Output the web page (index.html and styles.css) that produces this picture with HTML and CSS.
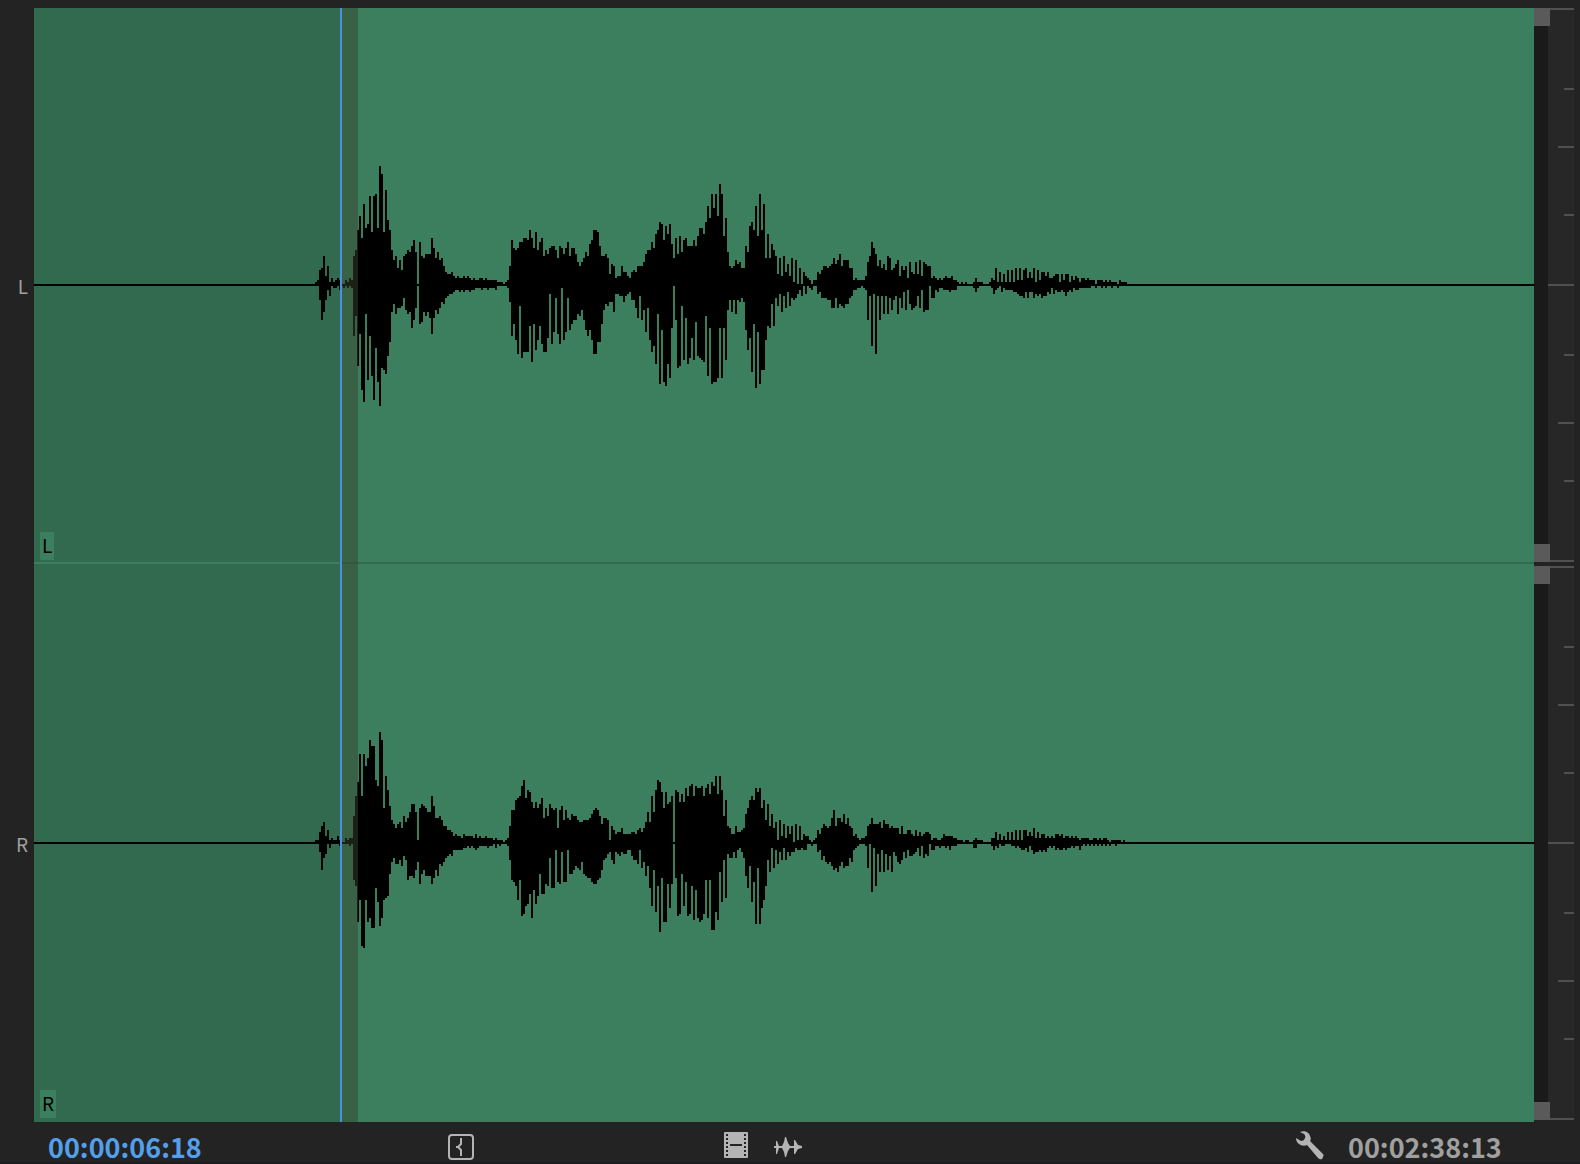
FILE: index.html
```
<!DOCTYPE html>
<html lang="en">
<head>
  <meta charset="UTF-8" />
  <meta name="viewport" content="width=device-width, initial-scale=1.0"/>
  <title>Source Monitor - Audio</title>
  <link rel="stylesheet" href="styles.css">
</head>
<body>
  <main class="monitor">
    <div class="gutter">
      <div class="gutter-label">L</div>
      <div class="gutter-label">R</div>
    </div>

    <!-- clip with both channels -->
    <div class="clip">
      <div class="channel">
        <svg class="wave" id="waveL" viewBox="0 0 1500 554" preserveAspectRatio="none"></svg>
        <span class="tag">L</span>
      </div>
      <div class="divider"></div>
      <div class="channel">
        <svg class="wave" id="waveR" viewBox="0 0 1500 554" preserveAspectRatio="none"></svg>
        <span class="tag">R</span>
      </div>
      <div class="in-range"></div>
      <div class="playhead"></div>
    </div>

    <!-- vertical zoom bars and level rulers -->
    <div class="side">
      <div class="side-row">
        <div class="zoom-bar"><div class="handle"></div><div class="handle"></div></div>
        <svg class="ruler" viewBox="0 0 26 554" preserveAspectRatio="none">
          <path d="M2 1H26M16 81H26M10 139H26M16 207H26M0 277H26M16 347H26M10 415H26M16 473H26M2 553H26"/>
        </svg>
      </div>
      <div class="side-row">
        <div class="zoom-bar"><div class="handle"></div><div class="handle"></div></div>
        <svg class="ruler" viewBox="0 0 26 554" preserveAspectRatio="none">
          <path d="M2 1H26M16 81H26M10 139H26M16 207H26M0 277H26M16 347H26M10 415H26M16 473H26M2 553H26"/>
        </svg>
      </div>
    </div>
  </main>

  <footer class="toolbar">
    <input class="timecode current" type="text" value="00:00:06:18" aria-label="Playhead position">
    <div class="tools">
      <button type="button" aria-label="Mark in">
        <svg width="26" height="26" viewBox="0 0 26 26" fill="none" stroke="#b4b4b4" stroke-width="2">
          <rect x="1" y="1" width="24" height="24" rx="3"/>
          <path d="M13 4V10L10 13L13 16V22"/>
          <path d="M8 13H11"/>
        </svg>
      </button>
    </div>
    <div class="tools">
      <button type="button" class="raised" aria-label="Drag video only">
        <svg width="24" height="26" viewBox="0 0 24 26">
          <rect width="24" height="26" rx="1" fill="#b4b4b4"/>
          <path d="M3 2V25M21 2V25" stroke="#232323" stroke-width="2" stroke-dasharray="2 2"/>
          <path d="M6 13H18" stroke="#232323" stroke-width="2"/>
        </svg>
      </button>
      <button type="button" aria-label="Drag audio only">
        <svg width="28" height="20" viewBox="0 0 28 20" fill="#b4b4b4">
          <path d="M0 9H2V4H3L5 9H8L10 5L11 0H12L14 6L16 9H20V3H21L24 8L28 9V11L24 12L21 17H20V11H16L14 14L12 20H11L10 15L8 11H5L3 17H2V11H0Z"/>
        </svg>
      </button>
    </div>
    <div class="tools end">
      <button type="button" class="raised" aria-label="Settings">
        <svg width="28" height="29" viewBox="0 0 28 29" fill="#b4b4b4">
          <path d="M4 1C8-1 13 1 14 5C15 7 15 9 14 10L27 23Q28 24 27 26L26 28Q24 29 22 27L11 14C8 16 3 14 1 11Q0 9 0 7L5 10Q8 10 9 7Q10 5 8 3Z"/>
        </svg>
      </button>
      <output class="timecode duration">00:02:38:13</output>
    </div>
  </footer>

  <script>
    // one "up/down" pair for each 2 unit column
    const peaksL = `
      1/0 2/0 7/7 8/17 14/13 4/7 9/2 1/5 3/0 1/1 2/1 3/0 2/2 0/0 0/1 2/0 1/1 3/0 2/1 14/25 17/15 27/40 34/24 23/52 40/58
      28/14 30/47 44/25 26/45 44/57 45/31 28/48 59/60 55/41 26/42 47/44 32/35 27/28 17/13 12/9 14/14 8/11 12/11 7/10
      14/6 15/12 17/14 16/13 19/21 22/17 16/11 0/0 21/19 14/18 13/13 15/15 15/13 15/16 23/24 18/16 13/12 16/14 12/11 13/8
      9/9 6/6 5/5 5/4 6/4 4/3 3/2 4/2 3/3 3/2 4/3 3/2 4/2 3/3 2/2 3/2 2/1 2/1 3/1 3/2 2/1 3/1 2/2 2/1 2/1 2/1 2/2 1/0
      1/0 1/0 0/0 1/0 2/1
      9/8 22/25 18/19 17/27 18/34 21/10 21/36 23/33 23/33 22/33 27/20 23/38 18/19 26/32 17/27 21/20 23/29 14/33 17/33
      15/26 18/4 19/29 19/23 17/6 13/24 19/29 18/1 15/27 18/23 21/6 14/22 18/19 18/17 15/17 11/14 9/15 11/12 13/17 16/22
      14/25 20/22 22/27 27/34 27/34 26/28 19/28 14/19 14/12 15/9 13/10 5/8 10/8 9/13 3/4 4/4 4/5 9/5 6/8 6/5 4/4 3/3 6/7
      7/7 6/11 9/16 9/5 9/17 11/12 15/23 17/11 17/27 21/33 18/30 25/39 27/14 31/49 30/22 22/48 29/50 25/39 30/46 20/21
      13/0 23/17 15/41 24/40 16/10 22/37 23/16 19/39 19/36 19/26 22/37 19/18 24/35 28/36 28/37 25/38 31/15 39/45 33/21
      45/49 38/48 45/48 34/46 50/21 45/46 24/21 33/37 16/12 9/7 8/13 9/7 12/14 10/7 11/8 8/6 8/8 19/22 16/32 29/26 31/43
      27/19 39/51 24/23 45/49 27/42 40/42 13/27 25/20 13/21 20/9 17/20 14/6 5/10 13/4 4/13 14/5 6/11 10/3
      4/10 13/6 1/7 12/6 0/4 8/2 0/5 6/0 4/4 3/0 2/1 0/2 2/0 2/0 6/4 5/3 7/6 9/6 9/6 8/7 9/7 10/11 13/11 10/6 12/11 15/9
      9/10 12/11 12/9 12/9 8/6 8/5 2/2 3/2 2/1 2/1 2/0 2/1 4/2 11/17 14/5 21/30 18/4 15/34 9/5 12/17 8/5 10/14 7/5 14/14
      13/6 7/12 8/7 10/5 12/14 4/6 9/11 7/3 9/12 3/2 11/9 6/12 5/11 11/10 5/5 12/11 4/2 11/13 10/12 9/12 9/0 3/6 4/6 3/2
      2/3 3/1 2/1 3/2 4/2 3/2 3/3 4/2 2/2 2/2 1/0 0/0 1/0 0/0 1/0 0/0 0/0 0/0 1/1 3/3 1/1 1/0 1/0 0/0 0/0 0/0 1/0 3/1 2/4
      8/2 1/1 6/0 1/3 5/1 1/2 7/2 1/2 7/2 1/3 8/3 2/4 8/5 2/5 7/6 8/3 3/6 6/3 3/3 8/6 1/4 7/5 2/4 6/6 6/5 4/5 6/3 3/4 3/1
      4/4 5/2 5/3 1/3 5/2 2/3 5/5 5/3 1/2 4/3 2/1 4/2 3/2 1/1 3/1 3/1 2/1 3/1 2/1 2/0 2/0 0/1 2/0 2/0 2/1 1/0 2/1 1/0 2/0
      1/1 1/0 1/0 0/1 2/0 1/0 1/0 1/0`;

    const peaksR = `
      1/0 1/0 5/4 8/13 10/7 3/5 6/0 1/2 2/0 1/0 1/0 3/0 1/1 0/0 0/0 2/0 1/0 2/1 2/0 13/18 23/21 30/39 44/28 23/51 44/52
      38/28 42/39 51/37 48/42 48/42 31/22 28/29 55/41 51/37 17/28 33/27 26/26 18/15 11/9 9/7 7/10 9/10 10/8 7/11
      13/6 10/8 12/18 15/16 19/16 19/17 15/13 1/9 17/20 19/15 18/13 17/16 15/16 15/16 23/20 18/17 12/13 12/16 13/10 11/11
      8/9 8/7 6/6 6/5 5/6 3/3 4/3 3/3 3/3 2/3 4/2 3/2 3/1 3/2 3/1 2/2 4/3 2/2 3/1 2/1 2/1 3/1 2/2 2/1 2/1 1/0 2/2 1/0
      1/1 1/0 0/0 1/0 2/1
      8/8 16/18 16/19 21/21 22/28 23/18 28/36 31/35 22/31 26/30 25/25 20/37 17/23 20/30 17/26 19/15 22/25 12/25 17/20
      13/21 19/7 17/22 16/22 17/3 7/19 16/20 18/4 11/19 16/19 12/3 11/15 14/15 13/13 13/11 11/12 10/13 10/9 11/15 11/16
      11/17 12/17 14/19 16/20 17/20 16/18 13/17 9/13 12/8 12/7 11/5 1/4 8/8 6/10 4/4 5/5 5/6 7/4 4/5 4/5 4/3 4/3 5/6
      5/8 4/8 6/10 7/3 5/12 7/9 10/16 15/11 10/22 23/31 15/13 26/34 31/21 30/44 25/17 17/39 25/39 19/20 20/32 23/20
      0/0 26/17 25/36 20/35 24/15 20/31 27/19 23/36 28/35 29/21 23/38 28/23 27/37 27/39 28/38 23/35 27/18 29/37 24/18
      30/43 28/43 33/34 24/38 33/14 26/29 13/8 21/27 8/5 7/7 4/7 4/4 8/7 5/3 5/2 6/4 7/7 14/16 17/22 21/11 23/29
      21/19 27/40 25/12 27/40 17/32 21/28 11/21 19/8 8/14 14/2 7/12 10/3 1/10 11/4 3/8 9/2 2/8 8/4
      4/6 8/4 0/4 9/2 1/3 8/3 1/2 4/3 3/3 3/0 1/0 0/1 1/0 2/0 6/4 4/3 7/8 9/6 8/9 7/10 8/9 12/11 16/13 8/12 12/14 12/11
      10/9 14/12 9/11 12/11 8/7 7/9 3/3 4/2 2/1 1/0 2/0 2/0 3/1 8/12 9/0 12/24 9/2 9/21 9/5 10/14 7/3 11/14 9/5 9/13
      7/6 8/14 7/4 7/6 7/9 4/10 8/8 4/4 4/7 6/3 6/6 4/6 3/5 6/4 3/2 5/6 3/1 4/7 5/5 5/6 4/0 1/3 2/3 2/1
      1/1 1/2 2/1 4/1 3/2 3/1 3/3 3/1 2/1 2/1 1/0 1/0 1/0 0/0 1/0 1/0 0/0 0/0 1/2 2/2 1/0 1/0 1/0 0/0 0/0 0/0 0/0 2/1 2/3
      5/1 1/2 4/0 1/1 3/1 1/0 5/0 1/0 5/1 1/1 6/2 1/1 6/2 1/3 6/3 6/2 3/4 5/1 3/3 7/5 2/4 5/4 2/3 4/4 4/3 2/4 3/2 2/1 3/2
      2/1 4/3 4/2 3/3 4/3 2/2 3/3 3/2 2/2 3/1 2/2 3/1 2/1 1/3 2/1 2/0 2/1 2/0 1/1 1/0 2/1 2/0 1/1 2/0 1/1 2/0 2/1 1/0 0/1
      1/0 1/0 1/1 1/0 1/0 0/0 1/0 0/0`;

    function drawWave(id, peaks) {
      const middle = 276;
      let d = `M0 ${middle}H1500V${middle + 2}H0Z`;
      peaks.trim().split(/\s+/).forEach((pair, i) => {
        const [up, down] = pair.split('/').map(Number);
        d += `M${281 + i * 2} ${middle - up * 2}h2v${(up + down + 1) * 2}h-2z`;
      });
      document.getElementById(id).innerHTML = `<path d="${d}"/>`;
    }

    drawWave('waveL', peaksL);
    drawWave('waveR', peaksR);
  </script>
</body>
</html>
```

FILE: styles.css
```
* {
  box-sizing: border-box;
}
body {
  margin: 0;
  height: 100vh;
  display: flex;
  flex-direction: column;
  background: #232323;
  font-family: "Noto Sans CJK SC", "Noto Sans", sans-serif;
}
.monitor {
  flex: 1;
  min-height: 0;
  display: flex;
  padding: 8px 6px 0 0;
}
.gutter {
  width: 34px;
  display: flex;
  flex-direction: column;
  gap: 4px;
  padding-bottom: 2px;
}
.gutter-label {
  flex: 1;
  display: flex;
  align-items: center;
  justify-content: flex-end;
  padding: 2px 6px 0 0;
  color: #a0a0a0;
  font-size: 19px;
  line-height: 20px;
}
.clip {
  flex: 1;
  min-width: 0;
  position: relative;
  display: flex;
  flex-direction: column;
  padding-bottom: 2px;
  background: linear-gradient(to right, #316a4e 20.4%, #3b7f5f 20.4%);
}
.channel {
  flex: 1;
  min-height: 0;
  position: relative;
}
.divider {
  height: 2px;
  margin-bottom: 2px;
  background: linear-gradient(to right, #3b7f5f 20.4%, #316a4e 20.4%);
}
.wave {
  display: block;
  width: 100%;
  height: 100%;
  fill: #000;
  shape-rendering: crispEdges;
}
.tag {
  position: absolute;
  left: 6px;
  bottom: 2px;
  padding: 0 2px 2px;
  background: #3b7f5f;
  color: #000;
  font-size: 19px;
  line-height: 26px;
}
.in-range {
  position: absolute;
  top: 0;
  bottom: 0;
  left: 20.4%;
  width: 1.2%;
  background: rgba(55, 68, 44, 0.49);
}
.playhead {
  position: absolute;
  top: 0;
  bottom: 0;
  left: 20.4%;
  width: 2px;
  background: #4a90e2;
}
.side {
  width: 40px;
  display: flex;
  flex-direction: column;
  gap: 4px;
  padding-bottom: 2px;
}
.side-row {
  flex: 1;
  min-height: 0;
  display: flex;
}
.zoom-bar {
  position: relative;
  width: 14px;
  display: flex;
  flex-direction: column;
  justify-content: space-between;
  background: #1a1a1a;
}
.handle {
  width: 16px;
  height: 18px;
  background: #5a5a5a;
}
.ruler {
  width: 26px;
  height: 100%;
  background: #272727;
  stroke: #505050;
  stroke-width: 2;
  shape-rendering: crispEdges;
}
.toolbar {
  display: grid;
  grid-template-columns: 400fr 276fr 572fr 284fr;
  grid-template-rows: 30px;
  align-items: center;
  height: 42px;
  padding: 10px 0 0 48px;
  border-bottom: 2px solid #1c1c1e;
}
.timecode {
  font-family: inherit;
  font-size: 27px;
  font-weight: bold;
  line-height: 30px;
}
.current {
  width: 180px;
  height: 30px;
  padding: 0;
  border: none;
  background: none;
  color: #539fea;
}
.duration {
  color: #a0a0a0;
}
.tools {
  display: flex;
  align-items: center;
  height: 30px;
  gap: 26px;
}
.end {
  gap: 24px;
}
button {
  padding: 0;
  border: none;
  background: none;
  cursor: pointer;
}
.raised {
  padding-bottom: 4px;
}
button svg {
  display: block;
}
```
